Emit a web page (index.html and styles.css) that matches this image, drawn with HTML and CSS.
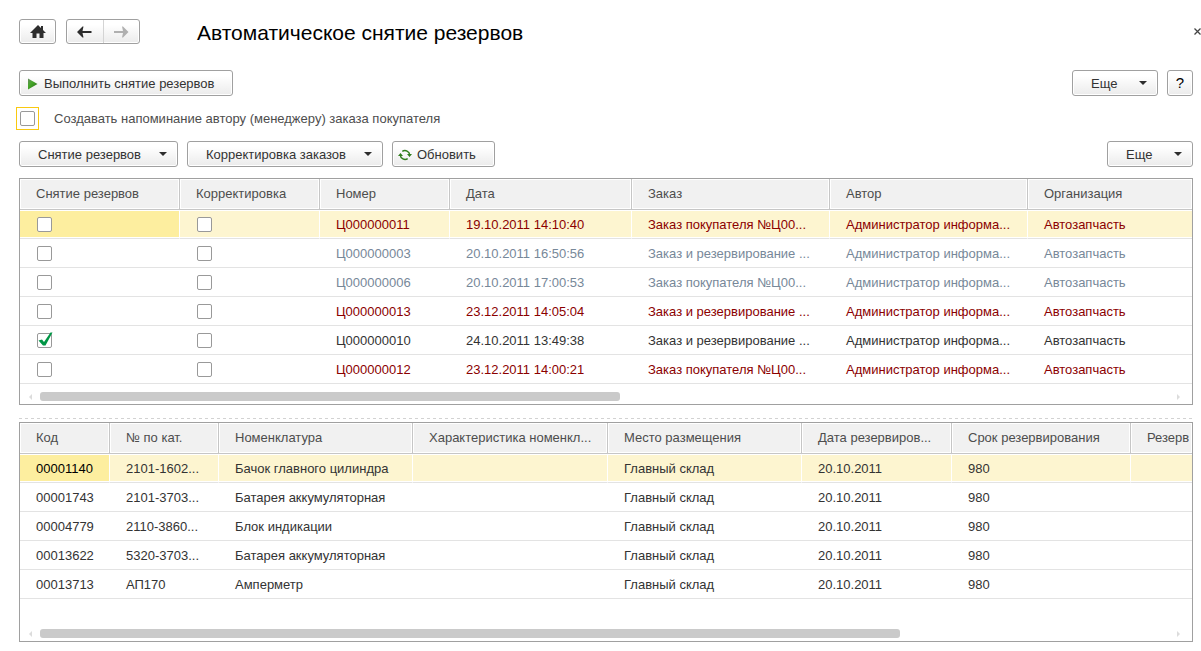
FILE: index.html
```html
<!DOCTYPE html>
<html lang="ru">
<head>
<meta charset="utf-8">
<title>Автоматическое снятие резервов</title>
<link rel="stylesheet" href="styles.css">
</head>
<body>
<header class="titlebar">
  <button class="btn btn-home" type="button" aria-label="Домой">
    <svg width="16" height="14" viewBox="0 0 16 14"><path fill="#2d2d2d" d="M8 0 L11 3 V1 H13 V5 L16 8 H13.500 V13 H9.500 V8.500 H6.500 V13 H2.500 V8 H0 Z"/></svg>
  </button>
  <div class="nav">
    <button class="nav-btn" type="button" aria-label="Назад">
      <svg width="15" height="12" viewBox="0 0 15 12"><path fill="#2d2d2d" d="M0 6 L5.500 0.500 H6.500 L5.500 5 H14.500 V7 H5.500 L6.500 11.500 H5.500 Z"/></svg>
    </button>
    <button class="nav-btn nav-next" type="button" aria-label="Вперед" disabled>
      <svg width="15" height="12" viewBox="0 0 15 12"><path fill="#b0b0b0" d="M14.500 6 L9 0.500 H8 L9 5 H0 V7 H9 L8 11.500 H9 Z"/></svg>
    </button>
  </div>
  <h1 class="title">Автоматическое снятие резервов</h1>
  <button class="close" type="button" aria-label="Закрыть">
    <svg width="7" height="7" viewBox="0 0 7 7"><path stroke="#444" stroke-width="1.300" d="M0.500 0.500 L6.500 6.500 M6.500 0.500 L0.500 6.500"/></svg>
  </button>
</header>

<div class="toolbar toolbar-main">
  <button class="btn btn-run" type="button">
    <svg width="10" height="12" viewBox="0 0 10 12"><defs><linearGradient id="play" x1="0" y1="0" x2="1" y2="1"><stop offset="0" stop-color="#6a8a63"/><stop offset="0.400" stop-color="#45a828"/><stop offset="1" stop-color="#2c641c"/></linearGradient></defs><path fill="url(#play)" d="M0 0.500 L9.500 6 L0 11.500 Z"/></svg>
    Выполнить снятие резервов
  </button>
  <span class="spacer"></span>
  <button class="btn btn-drop btn-more" type="button">Еще<span class="caret"></span></button>
  <button class="btn btn-help" type="button">?</button>
</div>

<div class="option">
  <span class="focus"><input class="check" type="checkbox" id="remind"></span>
  <label for="remind">Создавать напоминание автору (менеджеру) заказа покупателя</label>
</div>

<div class="toolbar toolbar-list">
  <button class="btn btn-drop btn-release" type="button">Снятие резервов<span class="caret"></span></button>
  <button class="btn btn-drop btn-adjust" type="button">Корректировка заказов<span class="caret"></span></button>
  <button class="btn btn-refresh" type="button">
    <svg width="14" height="12" viewBox="0 0 14 12"><g fill="none" stroke="#2f7d1a" stroke-width="1.400"><path d="M4.300 2.400 A4.700 4.700 0 0 1 11.700 6"/><path d="M9.700 9.600 A4.700 4.700 0 0 1 2.300 6"/></g><path fill="#2f7d1a" d="M0 7 L2.500 4 L5 7 Z M9 5 H14 L11.500 8 Z"/></svg>
    Обновить
  </button>
  <span class="spacer"></span>
  <button class="btn btn-drop btn-more" type="button">Еще<span class="caret"></span></button>
</div>

<section class="panel">
  <table class="grid">
    <colgroup><col class="w160"><col class="w140"><col class="w130"><col class="w182"><col class="w198"><col class="w198"><col></colgroup>
    <thead>
      <tr><th>Снятие резервов</th><th>Корректировка</th><th>Номер</th><th>Дата</th><th>Заказ</th><th>Автор</th><th>Организация</th></tr>
    </thead>
    <tbody>
      <tr class="selected red"><td class="current"><input class="check" type="checkbox" aria-label="Снятие резервов"></td><td><input class="check" type="checkbox" aria-label="Корректировка"></td><td>Ц000000011</td><td>19.10.2011 14:10:40</td><td>Заказ покупателя №Ц00...</td><td>Администратор информа...</td><td>Автозапчасть</td></tr>
      <tr class="muted"><td><input class="check" type="checkbox" aria-label="Снятие резервов"></td><td><input class="check" type="checkbox" aria-label="Корректировка"></td><td>Ц000000003</td><td>20.10.2011 16:50:56</td><td>Заказ и резервирование ...</td><td>Администратор информа...</td><td>Автозапчасть</td></tr>
      <tr class="muted"><td><input class="check" type="checkbox" aria-label="Снятие резервов"></td><td><input class="check" type="checkbox" aria-label="Корректировка"></td><td>Ц000000006</td><td>20.10.2011 17:00:53</td><td>Заказ покупателя №Ц00...</td><td>Администратор информа...</td><td>Автозапчасть</td></tr>
      <tr class="red"><td><input class="check" type="checkbox" aria-label="Снятие резервов"></td><td><input class="check" type="checkbox" aria-label="Корректировка"></td><td>Ц000000013</td><td>23.12.2011 14:05:04</td><td>Заказ и резервирование ...</td><td>Администратор информа...</td><td>Автозапчасть</td></tr>
      <tr><td><span class="ticked"><input class="check" type="checkbox" checked aria-label="Снятие резервов"><svg class="tick" width="15" height="15" viewBox="0 0 15 15"><path fill="#009646" d="M0.500 8.500 L4 7.500 L6 10 L12.500 0.500 H14.500 L7.500 13.500 H5 Z"/></svg></span></td><td><input class="check" type="checkbox" aria-label="Корректировка"></td><td>Ц000000010</td><td>24.10.2011 13:49:38</td><td>Заказ и резервирование ...</td><td>Администратор информа...</td><td>Автозапчасть</td></tr>
      <tr class="red"><td><input class="check" type="checkbox" aria-label="Снятие резервов"></td><td><input class="check" type="checkbox" aria-label="Корректировка"></td><td>Ц000000012</td><td>23.12.2011 14:00:21</td><td>Заказ покупателя №Ц00...</td><td>Администратор информа...</td><td>Автозапчасть</td></tr>
    </tbody>
  </table>
  <div class="scroll"><span class="arrow arrow-left"></span><div class="track"><div class="thumb" style="width: 51.2%"></div></div><span class="arrow arrow-right"></span></div>
</section>

<div class="splitter"></div>

<section class="panel panel-fill">
  <table class="grid">
    <colgroup><col class="w90"><col class="w109"><col class="w194"><col class="w195"><col class="w194"><col class="w150"><col class="w179"><col></colgroup>
    <thead>
      <tr><th>Код</th><th>№ по кат.</th><th>Номенклатура</th><th>Характеристика номенкл...</th><th>Место размещения</th><th>Дата резервиров...</th><th>Срок резервирования</th><th>Резерв</th></tr>
    </thead>
    <tbody>
      <tr class="selected"><td class="current">00001140</td><td>2101-1602...</td><td>Бачок главного цилиндра</td><td></td><td>Главный склад</td><td>20.10.2011</td><td>980</td><td></td></tr>
      <tr><td>00001743</td><td>2101-3703...</td><td>Батарея аккумуляторная</td><td></td><td>Главный склад</td><td>20.10.2011</td><td>980</td><td></td></tr>
      <tr><td>00004779</td><td>2110-3860...</td><td>Блок индикации</td><td></td><td>Главный склад</td><td>20.10.2011</td><td>980</td><td></td></tr>
      <tr><td>00013622</td><td>5320-3703...</td><td>Батарея аккумуляторная</td><td></td><td>Главный склад</td><td>20.10.2011</td><td>980</td><td></td></tr>
      <tr><td>00013713</td><td>АП170</td><td>Амперметр</td><td></td><td>Главный склад</td><td>20.10.2011</td><td>980</td><td></td></tr>
    </tbody>
  </table>
  <div class="scroll"><span class="arrow arrow-left"></span><div class="track"><div class="thumb" style="width: 76%"></div></div><span class="arrow arrow-right"></span></div>
</section>
</body>
</html>
```
FILE: styles.css
```css
* {
  box-sizing: border-box;
}

body {
  margin: 0;
  min-height: 100vh;
  padding: 19px 8px 9px 19px;
  display: flex;
  flex-direction: column;
  background: #fff;
  color: #333;
  font: 13px/16px "Liberation Sans", Arial, sans-serif;
}

button {
  margin: 0;
  font: inherit;
  color: inherit;
}

.btn,
.nav {
  display: flex;
  align-items: center;
  border: 1px solid #a0a0a0;
  border-radius: 3px;
  background: linear-gradient(#fff 20%, #ebebeb);
  box-shadow: inset 0 0 0 1px #fff;
}

.btn {
  height: 26px;
  padding: 2px 0 0;
  white-space: nowrap;
}

.titlebar {
  display: flex;
  align-items: center;
  height: 25px;
  margin-right: -8px;
}

.btn-home {
  width: 37px;
  height: 25px;
  padding: 0;
  justify-content: center;
  margin-right: 10px;
}

.nav {
  width: 74px;
  height: 25px;
}

.nav-btn {
  flex: 1;
  height: 23px;
  padding: 0;
  border: 0;
  background: none;
  display: flex;
  align-items: center;
  justify-content: center;
}

.nav-next {
  border-left: 1px solid #d4d4d4;
}

.title {
  flex: 1;
  margin: 3px 0 0 57px;
  font-size: 21px;
  line-height: 24px;
  font-weight: normal;
  color: #000;
}

.close {
  display: flex;
  padding: 0;
  border: 0;
  background: none;
}

.toolbar {
  display: flex;
  gap: 9px;
}

.toolbar-main {
  margin-top: 26px;
}

.spacer {
  flex: 1;
}

.btn-run {
  width: 214px;
  padding-left: 8px;
  gap: 6px;
}

.btn-drop {
  justify-content: space-between;
  padding: 2px 10px 0 18px;
}

.btn-more {
  width: 86px;
}

.btn-release {
  width: 159px;
}

.btn-adjust {
  width: 196px;
}

.btn-refresh {
  width: 103px;
  padding-left: 5px;
  gap: 5px;
}

.btn-help {
  width: 26px;
  padding: 0;
  justify-content: center;
  font-size: 15px;
  color: #000;
}

.caret {
  margin-bottom: 2px;
  border: 4px solid transparent;
  border-top-color: #2d2d2d;
  border-bottom: 0;
}

.option {
  display: flex;
  align-items: center;
  gap: 15px;
  margin: 11px 0 11px -3px;
  color: #4d4d4d;
}

.focus {
  display: flex;
  padding: 3px;
  border: 1px solid #f9c910;
}

.check {
  appearance: none;
  display: block;
  width: 15px;
  height: 15px;
  margin: 0;
  border: 1px solid #999;
  border-radius: 2px;
  background: #fff;
}

.panel {
  display: flex;
  flex-direction: column;
  border: 1px solid #a0a0a0;
  overflow: hidden;
}

.toolbar-list {
  margin-bottom: 11px;
}

.panel-fill {
  flex: 1;
}

.grid {
  width: 100%;
  table-layout: fixed;
  border-collapse: separate;
  border-spacing: 0;
}

.w90 { width: 90px; }
.w109 { width: 109px; }
.w130 { width: 130px; }
.w140 { width: 140px; }
.w150 { width: 150px; }
.w160 { width: 160px; }
.w179 { width: 179px; }
.w182 { width: 182px; }
.w194 { width: 194px; }
.w195 { width: 195px; }
.w198 { width: 198px; }

.grid th,
.grid td {
  padding: 0 0 0 16px;
  text-align: left;
  font-weight: normal;
  white-space: nowrap;
  overflow: hidden;
}

.grid th {
  height: 31px;
  border-right: 1px solid #c6c6c6;
  border-bottom: 1px solid #c6c6c6;
  background: #f1f1f1;
  box-shadow: inset 0 0 0 1px #fff;
  color: #4d4d4d;
}

.grid td {
  height: 29px;
  padding-top: 2px;
  border-bottom: 1px solid #e3e3e3;
}

.grid td:has(.check) {
  padding-top: 0;
}

.grid th:last-child {
  border-right: 0;
}

.grid .selected td {
  background: #fdf5d0;
  border-right: 1px solid #fff;
  box-shadow: inset 0 1px #fff, inset 0 -1px #fff;
}

.grid .selected .current {
  background: #fdee9f;
  color: #000;
}

.grid .selected td:last-child {
  border-right: 0;
}

.grid .check {
  margin-left: 1px;
}

.grid .red td {
  color: #8b0000;
}

.grid .muted td {
  color: #778899;
}

.ticked {
  display: block;
  position: relative;
}

.tick {
  position: absolute;
  left: 2px;
  top: -1px;
  pointer-events: none;
}

.scroll {
  display: flex;
  align-items: center;
  height: 9px;
  margin: auto 12px 3px 9px;
}

.panel:not(.panel-fill) .scroll {
  margin-top: 8px;
}

.track {
  flex: 1;
  margin: 0 5px 0 8px;
}

.thumb {
  height: 9px;
  border-radius: 3px;
  background: #cacaca;
}

.arrow {
  border: 3px solid transparent;
}

.arrow-left {
  border-left: 0;
  border-right-color: #dcdcdc;
}

.arrow-right {
  border-right: 0;
  border-left-color: #dcdcdc;
}

.splitter {
  height: 1px;
  margin: 13px 0 3px;
  background: repeating-linear-gradient(90deg, #d2d2d2 0 3px, transparent 3px 6px);
}
```
